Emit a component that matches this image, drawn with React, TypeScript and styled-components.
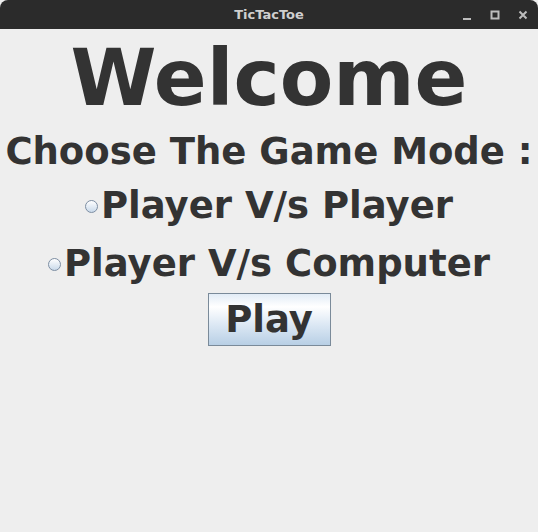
import styled, { createGlobalStyle } from 'styled-components';

const GlobalStyle = createGlobalStyle`
  html, body {
    margin: 0;
    padding: 0;
    background: #eeeeee;
  }
  #root {
    width: 538px;
    height: 532px;
  }
`;

const Window = styled.div`
  width: 538px;
  height: 532px;
  display: flex;
  flex-direction: column;
  background: #eeeeee;
  font-family: 'DejaVu Sans', sans-serif;
  color: #333333;
  overflow: hidden;
`;

const TitleBar = styled.div`
  height: 29px;
  flex: none;
  background: #2b2b2b;
  border-radius: 8px 8px 0 0;
  position: relative;
  display: flex;
  align-items: center;
  justify-content: center;
`;

const TitleText = styled.span`
  font-family: 'DejaVu Sans', sans-serif;
  font-weight: bold;
  font-size: 13px;
  color: #cfcfcf;
`;

const WindowControls = styled.div`
  position: absolute;
  right: 10px;
  top: 0;
  height: 29px;
  display: flex;
  align-items: center;
  gap: 18px;
`;

const ControlIcon = styled.svg`
  width: 10px;
  height: 10px;
  display: block;
`;

const Content = styled.div`
  flex: 1;
  display: flex;
  flex-direction: column;
  align-items: center;
`;

const Heading = styled.div`
  font-weight: bold;
  font-size: 78px;
  line-height: 98px;
  white-space: nowrap;
`;

const SubHeading = styled.div`
  font-weight: bold;
  font-size: 37px;
  line-height: 50px;
  white-space: nowrap;
`;

const RadioRow = styled.label`
  display: flex;
  align-items: center;
  gap: 3px;
  height: 58px;
  line-height: 58px;
  font-weight: bold;
  font-size: 37px;
  white-space: nowrap;
`;

const RadioCircle = styled.span`
  width: 11px;
  height: 11px;
  border-radius: 50%;
  border: 1px solid #7d8ea3;
  background: linear-gradient(#ffffff, #c9d9ea);
`;

const PlayButton = styled.button`
  width: 123px;
  height: 53px;
  border: 1px solid #7a8a99;
  background: linear-gradient(#e2ecf6 0%, #ffffff 25%, #dce8f4 60%, #b8cfe5 100%);
  font-family: 'DejaVu Sans', sans-serif;
  font-weight: bold;
  font-size: 37px;
  color: #333333;
  padding: 0;
  display: flex;
  align-items: center;
  justify-content: center;
`;

export default function App() {
  return (
    <>
      <GlobalStyle />
      <Window>
        <TitleBar>
          <TitleText>TicTacToe</TitleText>
          <WindowControls>
            <ControlIcon viewBox="0 0 10 10">
              <rect x="1" y="8" width="8" height="2" fill="#bdbdbd" />
            </ControlIcon>
            <ControlIcon viewBox="0 0 10 10">
              <rect x="1.5" y="1.5" width="7" height="7" fill="none" stroke="#bdbdbd" strokeWidth="2" />
            </ControlIcon>
            <ControlIcon viewBox="0 0 10 10">
              <path d="M1.5 1.5 L8.5 8.5 M8.5 1.5 L1.5 8.5" stroke="#bdbdbd" strokeWidth="2" />
            </ControlIcon>
          </WindowControls>
        </TitleBar>
        <Content>
          <Heading>Welcome</Heading>
          <SubHeading>Choose The Game Mode :</SubHeading>
          <RadioRow>
            <RadioCircle />
            Player V/s Player
          </RadioRow>
          <RadioRow>
            <RadioCircle />
            Player V/s Computer
          </RadioRow>
          <PlayButton>Play</PlayButton>
        </Content>
      </Window>
    </>
  );
}
